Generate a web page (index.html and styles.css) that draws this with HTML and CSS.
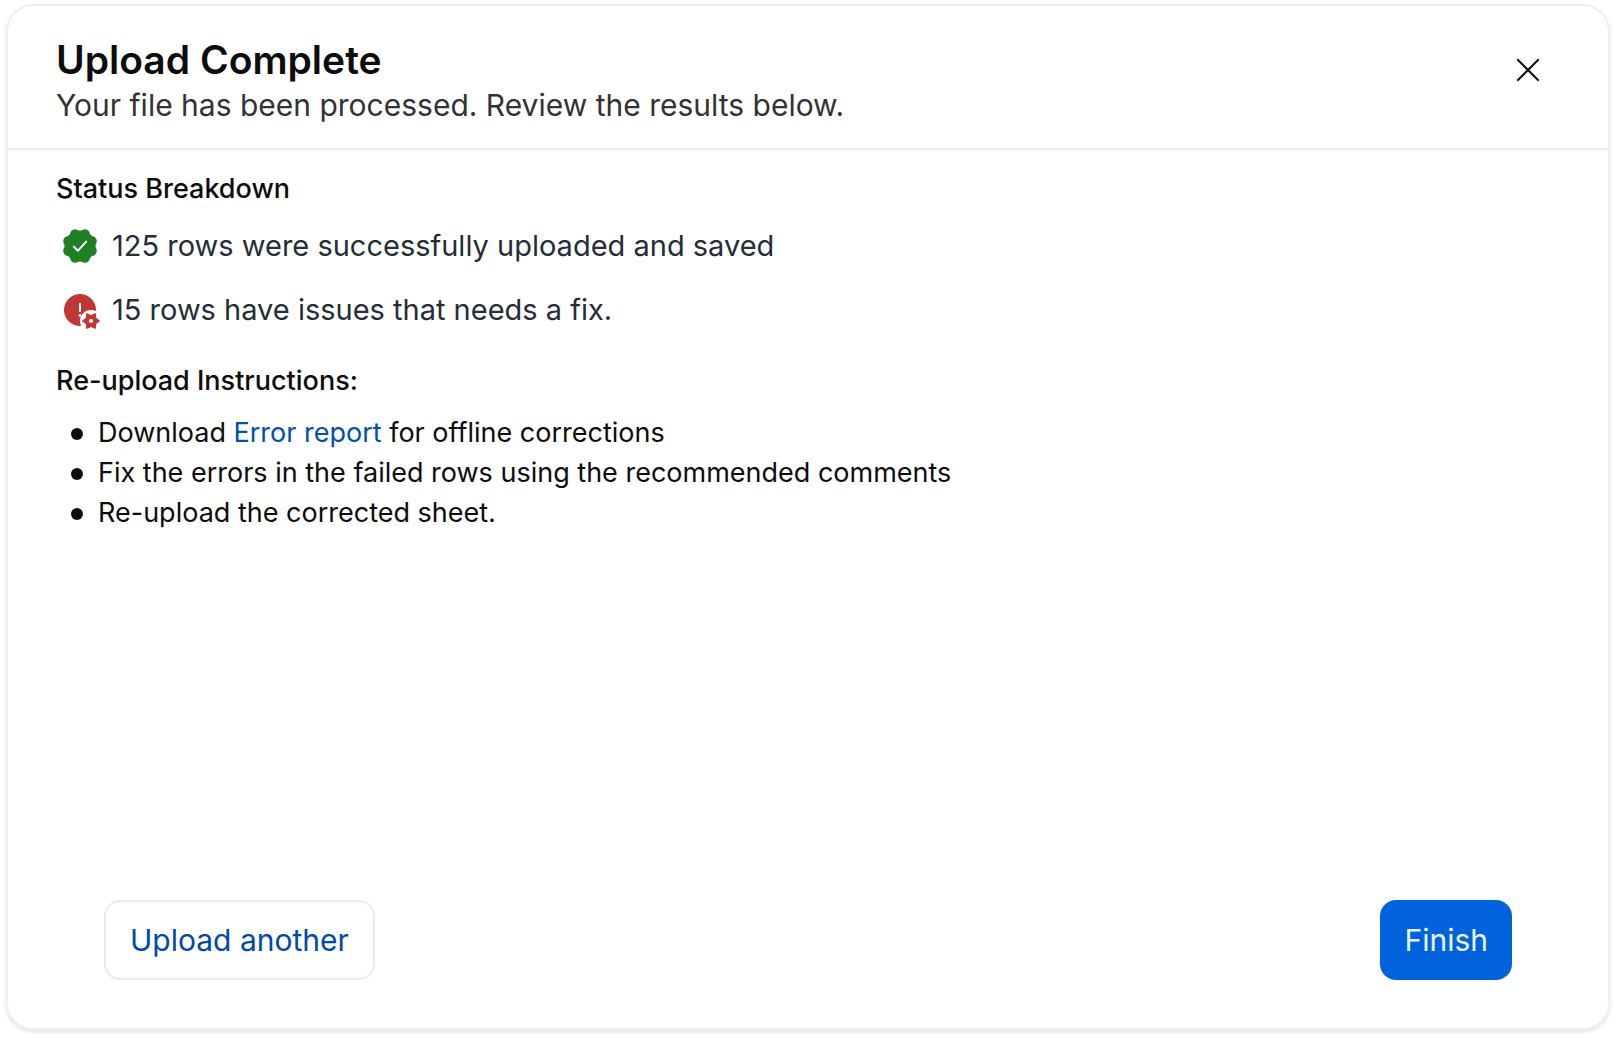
FILE: index.html
```html
<!DOCTYPE html>
<html lang="en">
<head>
<meta charset="utf-8">
<meta name="viewport" content="width=device-width, initial-scale=1">
<title>Upload Complete</title>
<link rel="stylesheet" href="styles.css">
</head>
<body>
<main class="dialog" role="dialog" aria-labelledby="dialog-title">
  <header class="dialog-header">
    <div class="dialog-heading">
      <h1 class="dialog-title" id="dialog-title">Upload Complete</h1>
      <p class="dialog-subtitle">Your file has been processed. Review the results below.</p>
    </div>
    <button class="close-button" type="button" aria-label="Close">
      <svg width="32" height="32" viewBox="0 0 32 32" fill="none" stroke="currentColor" stroke-width="2" stroke-linecap="square">
        <path d="M6 6 26 26M26 6 6 26"/>
      </svg>
    </button>
  </header>

  <section class="dialog-body">
    <h2 class="section-title">Status Breakdown</h2>
    <ul class="status-list">
      <li class="status-row">
        <svg class="status-icon" viewBox="0 0 48 40" aria-hidden="true">
          <g fill="#1f8023">
            <circle cx="24" cy="20" r="15.6"/>
            <circle cx="28.8" cy="8.4" r="5.2"/>
            <circle cx="35.6" cy="15.2" r="5.2"/>
            <circle cx="35.6" cy="24.8" r="5.2"/>
            <circle cx="28.8" cy="31.6" r="5.2"/>
            <circle cx="19.2" cy="31.6" r="5.2"/>
            <circle cx="12.4" cy="24.8" r="5.2"/>
            <circle cx="12.4" cy="15.2" r="5.2"/>
            <circle cx="19.2" cy="8.4" r="5.2"/>
          </g>
          <path d="M17.8 20.6 21.8 24.8 30.2 15.6" fill="none" stroke="#fff" stroke-width="2" stroke-linecap="round" stroke-linejoin="round"/>
        </svg>
        <span>125 rows were successfully uploaded and saved</span>
      </li>
      <li class="status-row">
        <svg class="status-icon" viewBox="0 0 48 40" aria-hidden="true">
          <circle cx="24" cy="20" r="16" fill="#c13636"/>
          <path d="M24 13V22" stroke="#fff" stroke-width="2"/>
          <circle cx="24" cy="25.4" r="1.4" fill="#fff"/>
          <circle cx="35" cy="31" r="11" fill="#fff"/>
          <path d="M43.6 31 39.8 33.8 39.3 38.4 35 36.5 30.7 38.4 30.2 33.8 26.4 31 30.2 28.2 30.7 23.6 35 25.5 39.3 23.6 39.8 28.2Z" fill="#c13636" stroke="#c13636" stroke-width="1" stroke-linejoin="round"/>
          <circle cx="35" cy="31" r="2.1" fill="#fff"/>
        </svg>
        <span>15 rows have issues that needs a fix.</span>
      </li>
    </ul>

    <h2 class="section-title">Re-upload Instructions:</h2>
    <ul class="instructions">
      <li>Download <a class="link" href="#error-report">Error report</a> for offline corrections</li>
      <li>Fix the errors in the failed rows using the recommended comments</li>
      <li>Re-upload the corrected sheet.</li>
    </ul>
  </section>

  <footer class="dialog-footer">
    <button class="button button-secondary" type="button">Upload another</button>
    <button class="button button-primary" type="button">Finish</button>
  </footer>
</main>
</body>
</html>
```
FILE: styles.css
```css
* {
  box-sizing: border-box;
}

body {
  margin: 0;
  padding: 4px 6px 8px;
  min-height: 100vh;
  display: flex;
  background: #fff;
  color: #0d0d0d;
  font-family: Inter, "Liberation Sans", sans-serif;
}

h1,
h2,
p,
ul {
  margin: 0;
  padding: 0;
}

ul {
  list-style: none;
}

.dialog {
  flex: 1;
  display: flex;
  flex-direction: column;
  border: 2px solid #edf1f5;
  border-radius: 28px;
  box-shadow: 0 2px 4px rgba(0, 0, 0, 0.12);
}

.dialog-header {
  display: flex;
  align-items: flex-start;
  justify-content: space-between;
  padding: 30px 64px 22px 48px;
  border-bottom: 2px solid #e8ecf0;
}

.dialog-title {
  font-size: 39px;
  font-weight: 600;
  line-height: 48px;
}

.dialog-subtitle {
  color: #333;
  font-size: 30px;
  line-height: 42px;
}

.close-button {
  width: 32px;
  height: 32px;
  margin-top: 18px;
  padding: 0;
  border: 0;
  background: none;
  color: #0d0d0d;
  cursor: pointer;
}

.close-button svg {
  display: block;
}

.dialog-body {
  flex: 1;
  padding: 19px 48px;
}

.section-title {
  font-size: 27px;
  font-weight: 500;
  line-height: 40px;
}

.status-list {
  display: flex;
  flex-direction: column;
  gap: 24px;
  padding: 17px 0 31px;
}

.status-row {
  display: flex;
  align-items: center;
  gap: 8px;
  color: #252d37;
  font-size: 29px;
  line-height: 40px;
}

.status-icon {
  flex: none;
  width: 48px;
  height: 40px;
}

.instructions {
  padding-top: 12px;
  font-size: 27px;
  line-height: 40px;
}

.instructions li::before {
  content: "";
  display: inline-block;
  width: 12px;
  height: 12px;
  margin: 0 15px;
  border-radius: 50%;
  background: #0d0d0d;
  vertical-align: 2px;
}

.link {
  color: #004fb0;
  text-decoration: none;
}

.dialog-footer {
  display: flex;
  align-items: center;
  justify-content: space-between;
  padding: 0 96px 48px;
}

.button {
  height: 80px;
  padding: 0 24px;
  border: 0;
  border-radius: 16px;
  font-family: inherit;
  font-size: 30px;
  line-height: 40px;
  cursor: pointer;
}

.button-secondary {
  border: 2px solid #e8ecf0;
  background: #fff;
  color: #004aa8;
}

.button-primary {
  background: #0063db;
  color: #e9f3ff;
}
```
